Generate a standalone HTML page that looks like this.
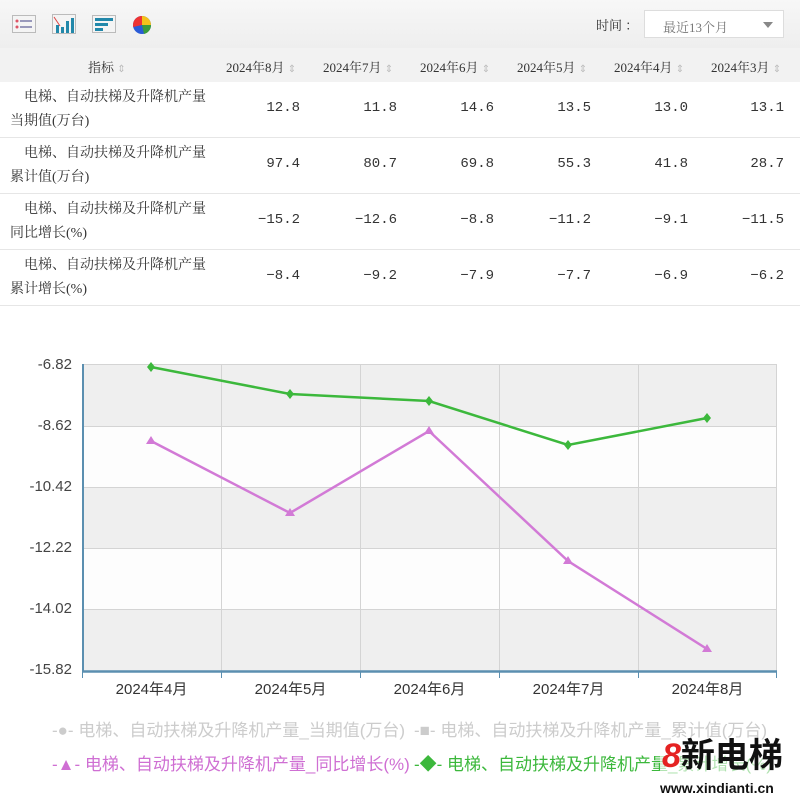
<!DOCTYPE html>
<html><head><meta charset="utf-8"><style>
*{margin:0;padding:0;box-sizing:border-box}
body{width:800px;height:802px;background:#fff;position:relative;overflow:hidden;font-family:"Liberation Serif","Noto Serif CJK SC",serif;color:#333}
.a{position:absolute}
.tb{left:0;top:0;width:800px;height:48px;background:linear-gradient(#f7f7f7,#eeeeee)}
.hd{left:0;top:48px;width:800px;height:34px;background:#f2f2f2;font-size:13px}
.row{left:0;width:800px;height:56px;border-bottom:1px solid #e6e6e6;font-size:14px}
.lab{position:absolute;left:10px;top:4px;line-height:24px;width:210px}
.n{position:absolute;top:18px;font-size:14px;text-align:right;width:80px;font-family:"Liberation Mono","Noto Serif CJK SC",monospace}
.h{position:absolute;top:9px;font-size:13px}
.s{color:#bbb;font-size:10px}
.y{position:absolute;left:0;width:72px;text-align:right;font-family:"Liberation Sans",sans-serif;font-size:15px;color:#444}
.x{position:absolute;top:678px;width:139px;text-align:center;font-family:"Liberation Sans","Noto Sans CJK SC",sans-serif;font-size:15px;color:#333}
.lg{position:absolute;font-family:"Liberation Sans","Noto Sans CJK SC",sans-serif;font-size:17px;white-space:nowrap}
</style></head><body>
<div class="a tb">
 <svg class="a" style="left:12px;top:15px" width="24" height="18"><rect x="0.5" y="0.5" width="23" height="17" fill="#f4f4f4" stroke="#bbb"/><circle cx="5" cy="6" r="1.5" fill="#d56"/><circle cx="5" cy="12" r="1.5" fill="#d56"/><rect x="8" y="5" width="12" height="2" fill="#99b"/><rect x="8" y="11" width="12" height="2" fill="#99b"/></svg>
 <svg class="a" style="left:52px;top:14px" width="24" height="20"><rect x="0.5" y="0.5" width="23" height="19" fill="#f4f4f4" stroke="#bbb"/><rect x="4" y="11" width="3" height="8" fill="#28a"/><rect x="9" y="13" width="3" height="6" fill="#28a"/><rect x="14" y="7" width="3" height="12" fill="#28a"/><rect x="19" y="4" width="3" height="15" fill="#28a"/><path d="M2 3 L8 12" stroke="#d44" fill="none"/></svg>
 <svg class="a" style="left:92px;top:15px" width="24" height="18"><rect x="0.5" y="0.5" width="23" height="17" fill="#f4f4f4" stroke="#bbb"/><rect x="3" y="3" width="18" height="3" fill="#28a"/><rect x="3" y="8" width="13" height="3" fill="#28a"/><rect x="3" y="13" width="8" height="3" fill="#28a"/></svg>
 <svg class="a" style="left:132px;top:15px" width="20" height="20"><circle cx="10" cy="10" r="9" fill="#2a5bd7"/><path d="M10 10 L10 1 A9 9 0 0 1 19 10Z" fill="#f4c21b"/><path d="M10 10 L19 10 A9 9 0 0 1 12 19Z" fill="#3b9c3b"/><path d="M10 10 L10 1 A9 9 0 0 0 1 10 L1 12Z" fill="#e33"/></svg>
 <div class="a" style="left:596px;top:15px;font-size:13px">时间 ：</div>
 <div class="a" style="left:644px;top:10px;width:140px;height:28px;background:#fff;border:1px solid #ddd;font-size:13px;color:#777;padding:6px 0 0 18px">最近13个月<span style="position:absolute;right:10px;top:11px;border:5px solid transparent;border-top:6px solid #888"></span></div>
</div>
<div class="a hd">
 <span class="h" style="left:88px">指标 <span class="s">⇕</span></span>
 <span class="h" style="left:226px">2024年8月 <span class="s">⇕</span></span>
 <span class="h" style="left:323px">2024年7月 <span class="s">⇕</span></span>
 <span class="h" style="left:420px">2024年6月 <span class="s">⇕</span></span>
 <span class="h" style="left:517px">2024年5月 <span class="s">⇕</span></span>
 <span class="h" style="left:614px">2024年4月 <span class="s">⇕</span></span>
 <span class="h" style="left:711px">2024年3月 <span class="s">⇕</span></span>
</div>
<div class="a row" style="top:82px"><div class="lab">&emsp;电梯、自动扶梯及升降机产量<br>当期值(万台)</div><span class="n" style="left:220px">12.8</span><span class="n" style="left:317px">11.8</span><span class="n" style="left:414px">14.6</span><span class="n" style="left:511px">13.5</span><span class="n" style="left:608px">13.0</span><span class="n" style="left:704px">13.1</span></div>
<div class="a row" style="top:138px"><div class="lab">&emsp;电梯、自动扶梯及升降机产量<br>累计值(万台)</div><span class="n" style="left:220px">97.4</span><span class="n" style="left:317px">80.7</span><span class="n" style="left:414px">69.8</span><span class="n" style="left:511px">55.3</span><span class="n" style="left:608px">41.8</span><span class="n" style="left:704px">28.7</span></div>
<div class="a row" style="top:194px"><div class="lab">&emsp;电梯、自动扶梯及升降机产量<br>同比增长(%)</div><span class="n" style="left:220px">−15.2</span><span class="n" style="left:317px">−12.6</span><span class="n" style="left:414px">−8.8</span><span class="n" style="left:511px">−11.2</span><span class="n" style="left:608px">−9.1</span><span class="n" style="left:704px">−11.5</span></div>
<div class="a row" style="top:250px"><div class="lab">&emsp;电梯、自动扶梯及升降机产量<br>累计增长(%)</div><span class="n" style="left:220px">−8.4</span><span class="n" style="left:317px">−9.2</span><span class="n" style="left:414px">−7.9</span><span class="n" style="left:511px">−7.7</span><span class="n" style="left:608px">−6.9</span><span class="n" style="left:704px">−6.2</span></div>

<svg class="a" style="left:0;top:0" width="800" height="802">
 <rect x="82" y="364" width="695" height="62" fill="#efefef"/>
 <rect x="82" y="426" width="695" height="61" fill="#fdfdfd"/>
 <rect x="82" y="487" width="695" height="61" fill="#efefef"/>
 <rect x="82" y="548" width="695" height="61" fill="#fdfdfd"/>
 <rect x="82" y="609" width="695" height="62" fill="#efefef"/>
 <g stroke="#d4d4d4" stroke-width="1">
  <line x1="82" y1="364.5" x2="777" y2="364.5"/><line x1="82" y1="426.5" x2="777" y2="426.5"/><line x1="82" y1="487.5" x2="777" y2="487.5"/><line x1="82" y1="548.5" x2="777" y2="548.5"/><line x1="82" y1="609.5" x2="777" y2="609.5"/>
  <line x1="221.5" y1="364" x2="221.5" y2="671"/><line x1="360.5" y1="364" x2="360.5" y2="671"/><line x1="499.5" y1="364" x2="499.5" y2="671"/><line x1="638.5" y1="364" x2="638.5" y2="671"/><line x1="776.5" y1="364" x2="776.5" y2="671"/>
 </g>
 <line x1="83" y1="364" x2="83" y2="672" stroke="#5b8fb0" stroke-width="2"/>
 <line x1="82" y1="671.5" x2="777" y2="671.5" stroke="#5b8fb0" stroke-width="2.5"/>
 <g stroke="#5b8fb0"><line x1="82.5" y1="672" x2="82.5" y2="678"/><line x1="221.5" y1="672" x2="221.5" y2="678"/><line x1="360.5" y1="672" x2="360.5" y2="678"/><line x1="499.5" y1="672" x2="499.5" y2="678"/><line x1="638.5" y1="672" x2="638.5" y2="678"/><line x1="776.5" y1="672" x2="776.5" y2="678"/></g>
 <polyline points="151,367 290,394 429,401 568,445 707,418" fill="none" stroke="#3cb83c" stroke-width="2.5"/>
 <g fill="#3cb83c"><path d="M151 362l4 5-4 5-4-5z"/><path d="M290 389l4 5-4 5-4-5z"/><path d="M429 396l4 5-4 5-4-5z"/><path d="M568 440l4 5-4 5-4-5z"/><path d="M707 413l4 5-4 5-4-5z"/></g>
 <polyline points="151,441 290,513 429,431 568,561 707,649" fill="none" stroke="#d27ad6" stroke-width="2.5"/>
 <g fill="#d27ad6"><path d="M151 436l5 8h-10z"/><path d="M290 508l5 8h-10z"/><path d="M429 426l5 8h-10z"/><path d="M568 556l5 8h-10z"/><path d="M707 644l5 8h-10z"/></g>
</svg>
<div class="y" style="top:356px">-6.82</div>
<div class="y" style="top:417px">-8.62</div>
<div class="y" style="top:478px">-10.42</div>
<div class="y" style="top:539px">-12.22</div>
<div class="y" style="top:600px">-14.02</div>
<div class="y" style="top:661px">-15.82</div>
<div class="x" style="left:82px">2024年4月</div>
<div class="x" style="left:221px">2024年5月</div>
<div class="x" style="left:360px">2024年6月</div>
<div class="x" style="left:499px">2024年7月</div>
<div class="x" style="left:638px">2024年8月</div>
<div class="lg" style="left:52px;top:716px;color:#ccc">-●- 电梯、自动扶梯及升降机产量_当期值(万台)</div>
<div class="lg" style="left:414px;top:716px;color:#ccc">-■- 电梯、自动扶梯及升降机产量_累计值(万台)</div>
<div class="lg" style="left:52px;top:750px;color:#cf6fd3">-▲- 电梯、自动扶梯及升降机产量_同比增长(%)</div>
<div class="lg" style="left:414px;top:750px;color:#3cb83c">-◆- 电梯、自动扶梯及升降机产量_累计增长(%)</div>
<div class="a" style="left:660px;top:740px;width:140px;height:62px;background:rgba(255,255,255,0.6)"></div>
<div class="a" style="left:662px;top:736px;font-family:'Liberation Sans','Noto Sans CJK SC',sans-serif;font-size:34px;font-weight:bold;color:#111;line-height:40px"><span style="color:#e52222;font-style:italic">8</span>新电梯</div>
<div class="a" style="left:660px;top:780px;font-family:'Liberation Sans',sans-serif;font-size:14px;font-weight:bold;color:#111">www.xindianti.cn</div>
</body></html>
